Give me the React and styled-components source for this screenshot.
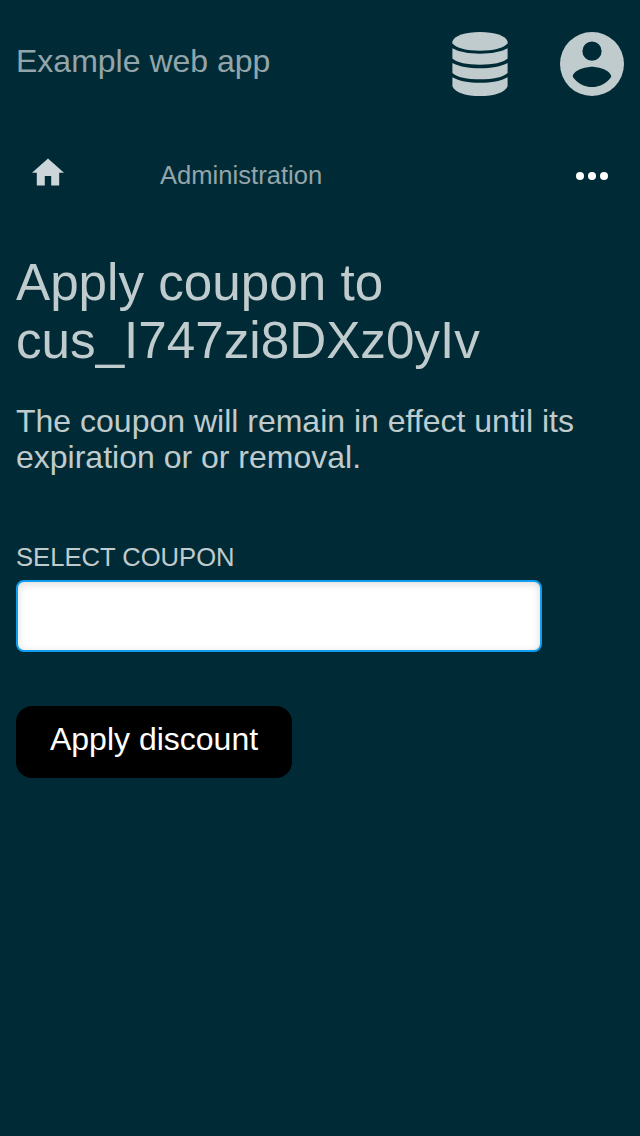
import React from 'react';
import styled, { createGlobalStyle } from 'styled-components';

const GlobalStyle = createGlobalStyle`
  * { box-sizing: border-box; }
  body {
    margin: 0;
    background: #002b36;
    color: #c0cbcd;
    font-family: "Liberation Sans", Arial, sans-serif;
  }
`;

const Page = styled.div`
  min-height: 1136px;
  background: #002b36;
`;

const Header = styled.header`
  display: flex;
  align-items: center;
  height: 128px;
  padding: 0 16px;
`;

const AppTitle = styled.div`
  flex: 1;
  padding-bottom: 6px;
  font-size: 32px;
  line-height: 36px;
  color: #93a5aa;
`;

const HeaderIcons = styled.div`
  display: flex;
  align-items: center;
  gap: 52px;

  svg { display: block; }
`;

const Navbar = styled.nav`
  display: flex;
  align-items: center;
  height: 96px;
  padding: 0 32px;
`;

const HomeLink = styled.a`
  width: 128px;
  padding-bottom: 8px;

  svg { display: block; }
`;

const NavLink = styled.a`
  flex: 1;
  padding-bottom: 2px;
  font-size: 25.6px;
  line-height: 30px;
  color: #93a5aa;
`;

const MoreIcon = styled.svg`
  display: block;
`;

const Content = styled.main`
  padding: 30px 16px 0;
`;

const Heading = styled.h1`
  margin: 0;
  font-size: 51.2px;
  line-height: 58px;
  font-weight: 400;
`;

const Description = styled.p`
  margin: 33px 0 0;
  font-size: 32px;
  line-height: 36px;
`;

const Label = styled.label`
  display: block;
  margin-top: 67px;
  font-size: 25.6px;
  line-height: 30px;
  text-transform: uppercase;
`;

const CouponSelect = styled.div`
  width: 526px;
  height: 72px;
  margin-top: 8px;
  border: 2px solid #109cef;
  border-radius: 8px;
  background: #fff;
  box-shadow: inset 0 2px 8px rgba(0, 0, 0, 0.14);
`;

const SubmitButton = styled.button`
  display: block;
  width: 276px;
  height: 72px;
  margin-top: 54px;
  padding: 0 0 6px;
  border: 0;
  border-radius: 16px;
  background: #000;
  color: #fff;
  font: 32px "Liberation Sans", Arial, sans-serif;
`;

export default function App() {
  return (
    <Page>
      <GlobalStyle />
      <Header>
        <AppTitle>Example web app</AppTitle>
        <HeaderIcons>
          <svg width="56" height="64" viewBox="0 0 56 64" fill="#c0cbcd">
            <path d="M.4 9.600C2 3.600 13.500 0 28 0S54 3.600 55.600 9.600V11.200C52 16 41.500 18.700 28 18.700S4 16 .4 11.200z" />
            <path d="M.4 16.300C7 20 16.500 21.700 28 21.700S49 20 55.600 16.300V26.500C51 30.600 41 32.700 28 32.700S5 30.600 .4 26.500z" />
            <path d="M.4 31C7 34.600 16.500 36.300 28 36.300S49 34.600 55.600 31V40.900C51 45.200 41 47.300 28 47.300S5 45.200 .4 40.900z" />
            <path d="M.4 45.200C7 49 16.500 50.800 28 50.800S49 49 55.600 45.200V54.200C53 60.600 42 64 28 64S3 60.600 .4 54.200z" />
          </svg>
          <svg width="64" height="64" viewBox="0 0 496 496" fill="#c0cbcd">
            <path fillRule="evenodd" d="M248 0a248 248 0 1 0 0 496a248 248 0 1 0 0-496zM248 74a74.500 74.500 0 1 1 0 149a74.500 74.500 0 1 1 0-149zM248 427c-62 0-117-32-149-80c1-49 99-77 149-77s148 28 149 77c-32 48-87 80-149 80z" />
          </svg>
        </HeaderIcons>
      </Header>
      <Navbar>
        <HomeLink>
          <svg width="32" height="28" viewBox="0 0 32 28" fill="#ccd5d7">
            <path d="M16 .4L0 14.800h4.800V27.600h8V18h6.400v9.600h8V14.800H32z" />
          </svg>
        </HomeLink>
        <NavLink>Administration</NavLink>
        <MoreIcon width="32" height="8" viewBox="0 0 32 8" fill="#fff">
          <circle cx="4" cy="4" r="4" />
          <circle cx="16" cy="4" r="4" />
          <circle cx="28" cy="4" r="4" />
        </MoreIcon>
      </Navbar>
      <Content>
        <Heading>Apply coupon to cus_I747zi8DXz0yIv</Heading>
        <Description>The coupon will remain in effect until its expiration or or removal.</Description>
        <Label>Select coupon</Label>
        <CouponSelect />
        <SubmitButton>Apply discount</SubmitButton>
      </Content>
    </Page>
  );
}
